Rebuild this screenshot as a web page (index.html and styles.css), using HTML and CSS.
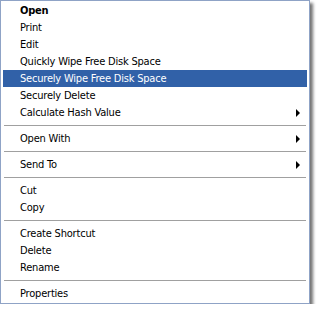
FILE: index.html
```html
<!DOCTYPE html>
<html lang="en">

<head>
    <meta charset="UTF-8">
    <title>Context Menu</title>
    <link rel="stylesheet" href="styles.css">
</head>

<body>
    <div class="menu">
        <div class="item bold">Open</div>
        <div class="item">Print</div>
        <div class="item">Edit</div>
        <div class="item">Quickly Wipe Free Disk Space</div>
        <div class="item active">Securely Wipe Free Disk Space</div>
        <div class="item">Securely Delete</div>
        <div class="item sub">Calculate Hash Value</div>
        <div class="sep"></div>
        <div class="item sub">Open With</div>
        <div class="sep"></div>
        <div class="item sub">Send To</div>
        <div class="sep"></div>
        <div class="item">Cut</div>
        <div class="item">Copy</div>
        <div class="sep"></div>
        <div class="item">Create Shortcut</div>
        <div class="item">Delete</div>
        <div class="item">Rename</div>
        <div class="sep"></div>
        <div class="item">Properties</div>
    </div>
</body>

</html>
```

FILE: styles.css
```css
body {
    margin: 0;
    background-color: #ffffff;
    font-family: "DejaVu Sans Condensed", "DejaVu Sans", sans-serif;
    font-size: 11px;
    letter-spacing: -0.2px;
    color: #000000;
}

/* 메뉴 박스 */
.menu {
    width: 310px;
    box-sizing: border-box;
    background-color: #ffffff;
    border: 1px solid #8fa3c6;
    padding: 1px 2px;
    box-shadow: 3px 3px 3px rgba(0, 0, 0, 0.55);
}

.item {
    position: relative;
    height: 17px;
    line-height: 17px;
    padding-left: 17px;
    white-space: nowrap;
}

.bold {
    font-weight: bold;
}

.active {
    background-color: #3161a8;
    color: #ffffff;
}

/* 하위 메뉴 화살표 */
.sub::after {
    content: "";
    position: absolute;
    right: 7px;
    top: 5px;
    border-left: 4px solid #000000;
    border-top: 4px solid transparent;
    border-bottom: 4px solid transparent;
}

.sep {
    height: 1px;
    margin: 4px 1px;
    background-color: #a0a0a0;
}
```
